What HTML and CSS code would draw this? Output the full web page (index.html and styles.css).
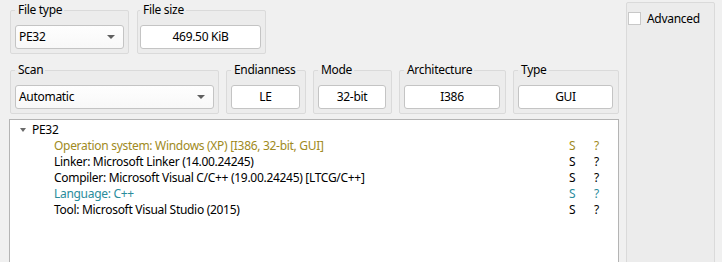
FILE: index.html
```html
<!DOCTYPE html>
<html>
<head>
<meta charset="utf-8">
<link rel="stylesheet" href="styles.css">
</head>
<body>
<div class="app">
  <div class="left">
    <div class="grouprow first">
      <fieldset class="group w-filetype">
        <legend>File type</legend>
        <div class="combo"><span>PE32</span><span class="arrow"></span></div>
      </fieldset>
      <fieldset class="group w-filesize">
        <legend>File size</legend>
        <div class="field">469.50 KiB</div>
      </fieldset>
    </div>
    <div class="grouprow second">
      <fieldset class="group w-scan">
        <legend>Scan</legend>
        <div class="combo"><span>Automatic</span><span class="arrow"></span></div>
      </fieldset>
      <fieldset class="group w-endian">
        <legend>Endianness</legend>
        <div class="field">LE</div>
      </fieldset>
      <fieldset class="group w-mode">
        <legend>Mode</legend>
        <div class="field">32-bit</div>
      </fieldset>
      <fieldset class="group w-arch">
        <legend>Architecture</legend>
        <div class="field">I386</div>
      </fieldset>
      <fieldset class="group w-type">
        <legend>Type</legend>
        <div class="field">GUI</div>
      </fieldset>
    </div>
    <div class="tree">
      <div class="row parent">
        <span class="name"><span class="twisty"></span>PE32</span>
      </div>
      <div class="row child os">
        <span class="name">Operation system: Windows (XP) [I386, 32-bit, GUI]</span>
        <span class="s">S</span><span class="q">?</span>
      </div>
      <div class="row child">
        <span class="name">Linker: Microsoft Linker (14.00.24245)</span>
        <span class="s">S</span><span class="q">?</span>
      </div>
      <div class="row child">
        <span class="name">Compiler: Microsoft Visual C/C++ (19.00.24245) [LTCG/C++]</span>
        <span class="s">S</span><span class="q">?</span>
      </div>
      <div class="row child lang">
        <span class="name">Language: C++</span>
        <span class="s">S</span><span class="q">?</span>
      </div>
      <div class="row child">
        <span class="name">Tool: Microsoft Visual Studio (2015)</span>
        <span class="s">S</span><span class="q">?</span>
      </div>
    </div>
  </div>
  <div class="panel">
    <label class="check"><span class="box"></span><span>Advanced</span></label>
  </div>
</div>
</body>
</html>
```
FILE: styles.css
```css
* { box-sizing: border-box; }
html, body {
  margin: 0;
  padding: 0;
  width: 722px;
  height: 262px;
  overflow: hidden;
  background: #f0f0f0;
  font-family: "Noto Sans", "Open Sans", sans-serif;
  font-size: 12px;
  letter-spacing: -0.3px;
  color: #000;
}
.app {
  display: flex;
  align-items: flex-start;
}
.left {
  margin-left: 9px;
  width: 610px;
  display: flex;
  flex-direction: column;
}
.grouprow {
  display: flex;
  gap: 8px;
  margin-left: 1px;
}
.grouprow.first { margin-top: 2px; }
.grouprow.second { margin-top: 8px; gap: 7px; }
.group {
  margin: 0;
  min-width: 0;
  border: 1px solid #dadada;
  border-radius: 2px;
  background: #ececec;
  padding: 7px 4px 4px 4px;
}
.group legend {
  padding: 0 2px 0 3px;
  line-height: 16px;
  font-size: 12px;
}
.w-filetype { width: 119px; }
.w-filesize { width: 129px; padding-left: 2px; padding-right: 3px; }
.w-scan { width: 209px; }
.w-endian { width: 80px; }
.w-mode { width: 79px; }
.w-arch { width: 107px; }
.w-type { width: 106px; }
.combo, .field {
  height: 24px;
  background: #fff;
  border: 1px solid #c4c4c4;
  border-radius: 3px;
  display: flex;
  align-items: center;
  line-height: 16px;
}
.combo {
  justify-content: space-between;
  padding: 0 8px 0 3px;
  background: linear-gradient(#fefefe, #f8f8f8);
}
.combo .arrow {
  width: 0;
  height: 0;
  border-left: 4px solid transparent;
  border-right: 4px solid transparent;
  border-top: 4px solid #606060;
}
.field {
  justify-content: center;
  margin-right: 1px;
}
.tree {
  margin-top: 5px;
  height: 200px;
  background: #fff;
  border: 1px solid #b4b4b4;
  padding-top: 2px;
}
.row {
  display: flex;
  height: 16px;
  line-height: 16px;
  white-space: nowrap;
}
.row .name {
  flex: 1;
  display: flex;
  align-items: center;
}
.row.parent .name { padding-left: 10px; }
.twisty {
  width: 0;
  height: 0;
  border-left: 3.5px solid transparent;
  border-right: 3.5px solid transparent;
  border-top: 4px solid #6a6a6a;
  margin-right: 6px;
}
.row.child .name { padding-left: 44px; }
.row .s { width: 25px; }
.row .q { width: 24px; }
.row.os { color: #a08a22; }
.row.lang { color: #2a8c9c; }
.panel {
  margin-left: 7px;
  margin-top: 2px;
  width: 89px;
  height: 300px;
  border: 1px solid #dadada;
  border-radius: 2px;
  background: #ececec;
}
.check {
  display: flex;
  align-items: center;
  margin: 8px 0 0 1px;
  gap: 6px;
  line-height: 15px;
}
.check .box {
  width: 13px;
  height: 13px;
  background: #fff;
  border: 1px solid #c8c8c8;
}
```
